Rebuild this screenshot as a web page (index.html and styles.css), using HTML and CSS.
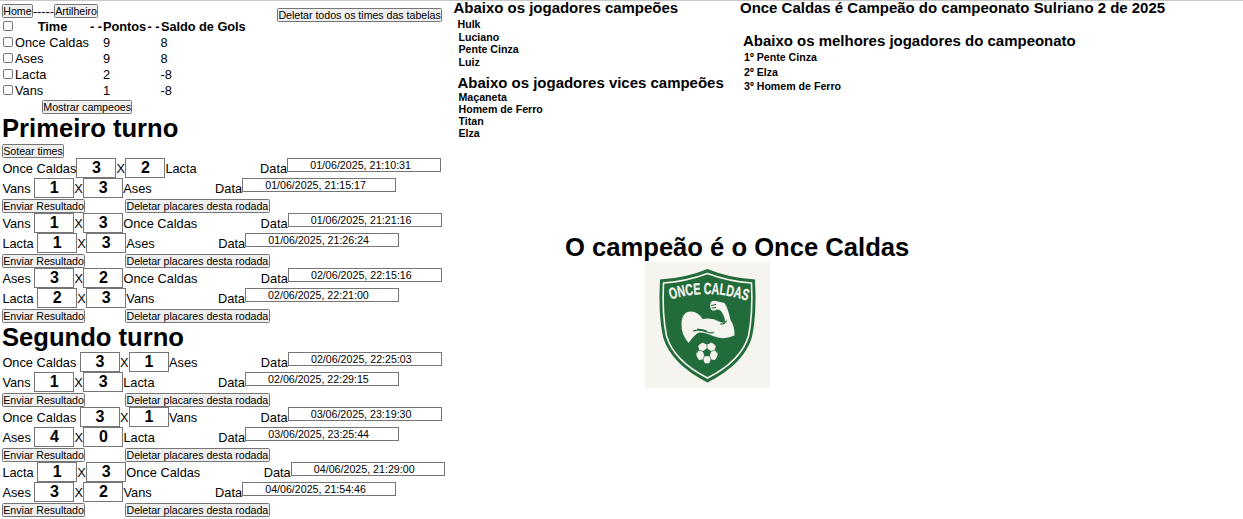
FILE: index.html
```html
<!DOCTYPE html>
<html lang="pt-BR">
<head>
<meta charset="utf-8">
<title>Campeonato</title>
<link rel="stylesheet" href="styles.css">
</head>
<body>
<div class="page">
  <main class="games">
    <div class="top">
      <section class="standings">
        <nav class="nav"><button>Home</button><span>-----</span><button>Artilheiro</button></nav>
        <div class="row head"><i class="check"></i><b class="time">Time</b><b>- -</b><b>Pontos</b><b>- -</b><b>Saldo de Gols</b></div>
        <div class="row"><i class="check"></i><span>Once Caldas</span><span>9</span><span>8</span></div>
        <div class="row"><i class="check"></i><span>Ases</span><span>9</span><span>8</span></div>
        <div class="row"><i class="check"></i><span>Lacta</span><span>2</span><span>-8</span></div>
        <div class="row"><i class="check"></i><span>Vans</span><span>1</span><span>-8</span></div>
        <div class="show"><button>Mostrar campeoes</button></div>
      </section>
      <button class="clear">Deletar todos os times das tabelas</button>
    </div>
    <h1>Primeiro turno</h1>
    <div class="draw"><button>Sotear times</button></div>

    <div class="match"><span class="home tight">Once Caldas</span><b class="score">3</b><span class="x">X</span><b class="score">2</b><span class="away">Lacta</span><span>Data</span><span class="date">01/06/2025, 21:10:31</span></div>
    <div class="match"><span class="home">Vans</span><b class="score">1</b><span class="x">X</span><b class="score">3</b><span class="away">Ases</span><span>Data</span><span class="date">01/06/2025, 21:15:17</span></div>
    <div class="actions"><button>Enviar Resultado</button><button>Deletar placares desta rodada</button></div>
    <div class="match"><span class="home">Vans</span><b class="score">1</b><span class="x">X</span><b class="score">3</b><span class="away">Once Caldas</span><span>Data</span><span class="date">01/06/2025, 21:21:16</span></div>
    <div class="match"><span class="home">Lacta</span><b class="score">1</b><span class="x">X</span><b class="score">3</b><span class="away">Ases</span><span>Data</span><span class="date">01/06/2025, 21:26:24</span></div>
    <div class="actions"><button>Enviar Resultado</button><button>Deletar placares desta rodada</button></div>
    <div class="match"><span class="home">Ases</span><b class="score">3</b><span class="x">X</span><b class="score">2</b><span class="away">Once Caldas</span><span>Data</span><span class="date">02/06/2025, 22:15:16</span></div>
    <div class="match"><span class="home">Lacta</span><b class="score">2</b><span class="x">X</span><b class="score">3</b><span class="away">Vans</span><span>Data</span><span class="date">02/06/2025, 22:21:00</span></div>
    <div class="actions"><button>Enviar Resultado</button><button>Deletar placares desta rodada</button></div>

    <h1>Segundo turno</h1>
    <div class="match"><span class="home">Once Caldas</span><b class="score">3</b><span class="x">X</span><b class="score">1</b><span class="away">Ases</span><span>Data</span><span class="date">02/06/2025, 22:25:03</span></div>
    <div class="match"><span class="home">Vans</span><b class="score">1</b><span class="x">X</span><b class="score">3</b><span class="away">Lacta</span><span>Data</span><span class="date">02/06/2025, 22:29:15</span></div>
    <div class="actions"><button>Enviar Resultado</button><button>Deletar placares desta rodada</button></div>
    <div class="match"><span class="home">Once Caldas</span><b class="score">3</b><span class="x">X</span><b class="score">1</b><span class="away">Vans</span><span>Data</span><span class="date">03/06/2025, 23:19:30</span></div>
    <div class="match"><span class="home">Ases</span><b class="score">4</b><span class="x">X</span><b class="score">0</b><span class="away">Lacta</span><span>Data</span><span class="date">03/06/2025, 23:25:44</span></div>
    <div class="actions"><button>Enviar Resultado</button><button>Deletar placares desta rodada</button></div>
    <div class="match"><span class="home">Lacta</span><b class="score">1</b><span class="x">X</span><b class="score">3</b><span class="away">Once Caldas</span><span>Data</span><span class="date">04/06/2025, 21:29:00</span></div>
    <div class="match"><span class="home">Ases</span><b class="score">3</b><span class="x">X</span><b class="score">2</b><span class="away">Vans</span><span>Data</span><span class="date">04/06/2025, 21:54:46</span></div>
    <div class="actions"><button>Enviar Resultado</button><button>Deletar placares desta rodada</button></div>
  </main>

  <aside class="results">
    <div class="lists">
      <div class="squads">
        <h3>Abaixo os jogadores campeões</h3>
        <ul class="winners"><li class="first">Hulk</li><li>Luciano</li><li>Pente Cinza</li><li>Luiz</li></ul>
        <h3 class="vice">Abaixo os jogadores vices campeões</h3>
        <ul class="runners"><li>Maçaneta</li><li>Homem de Ferro</li><li>Titan</li><li>Elza</li></ul>
      </div>
      <div class="honours">
        <h3>Once Caldas é Campeão do campeonato Sulriano 2 de 2025</h3>
        <h3 class="best">Abaixo os melhores jogadores do campeonato</h3>
        <ul class="podium"><li>1º Pente Cinza</li><li>2º Elza</li><li>3º Homem de Ferro</li></ul>
      </div>
    </div>
    <div class="champion">
      <h1>O campeão é o Once Caldas</h1>
      <svg class="crest" viewBox="0 0 125 126" width="125" height="126">
        <rect width="125" height="126" fill="#f5f4ef"/>
        <path d="M62.500 7Q84 16 110 17.500Q112 52 107 75Q99 102 62.500 120.500Q26 102 18 75Q13 52 15 17.500Q41 16 62.500 7Z" fill="#226b3b"/>
        <path d="M62.500 11.500Q84 19.500 106.500 21Q108 52 103.500 74Q96 99 62.500 116Q29 99 21.500 74Q17 52 18.500 21Q41 19.500 62.500 11.500Z" fill="none" stroke="#f5f4ef" stroke-width="1.600"/>
        <path id="arc" d="M25.500 37.500Q63 26 101.500 38.500" fill="none"/>
        <text class="crest-name"><textPath href="#arc" textLength="78" lengthAdjust="spacingAndGlyphs">ONCE CALDAS</textPath></text>
        <path d="M43.500 81Q36 72 36.500 62C36.500 54 40 49.500 46 49.500Q53 49.500 57.500 57Q67 55 74 59.500Q78 61.500 80 60Q80 54 75.500 48.500Q72 46.500 70 48.500Q66 49 65.500 46Q64.500 42 66 40Q68 38 72 39.200L79.500 41Q83 46 85.500 58Q90 65 89.500 73.500Q78 78.500 68 74Q60 70 54 70.500Q49 73 43.500 81Z" fill="#f5f4ef"/>
        <path d="M48 69Q54 67 60 69.500Q65 71.500 69 70.500M52 67Q58 67.500 62 69M75 62Q80 62.500 81.500 58.500M66 43.500L71 42.500M67 46L71 45.500" fill="none" stroke="#226b3b" stroke-width="1.100"/>
        <circle cx="62" cy="90.500" r="10.800" fill="#f5f4ef"/>
        <path d="M62 86.300L66.200 89.300L64.600 94.200H59.400L57.800 89.300ZM57.500 80.400L62 82.800L66.500 80.400L64 79.400H60ZM51.400 92L54.200 88L53 83.500L51 87ZM72.600 92L69.800 88L71 83.500L73 87ZM53.800 98L58.300 97.500L60 101.500L56 101ZM70.200 98L65.700 97.500L64 101.500L68 101Z" fill="#226b3b"/>
        <path d="M62 82.800V87M58 89.500L54 88M66 89.500L70 88M59.400 94L57.800 98M64.600 94L66.200 98" stroke="#226b3b" stroke-width=".7"/>
      </svg>
    </div>
  </aside>
</div>
</body>
</html>
```
FILE: styles.css
```css
* { box-sizing: border-box; }
body { margin: 0; background: #fff; color: #000; font: 12.8px/16px "Liberation Sans", Arial, sans-serif; }
h1, h3, ul { margin: 0; padding: 0; }
ul { list-style: none; }
.page { display: flex; height: 519px; border-top: 1px solid #c8c8c8; overflow: hidden; }
.games { width: 450px; flex: none; padding: 3px 0 0 2px; white-space: nowrap; }
button { display: block; height: 14px; padding: 0 .3px; border: 1px solid #767676; border-radius: 1.5px; background: #efefef; color: #000; font: 10.667px/12px "Liberation Sans", Arial, sans-serif; letter-spacing: -.035px; white-space: nowrap; }
.top { display: flex; justify-content: space-between; align-items: flex-start; height: 110px; }
.clear { margin: 4px 8px 0 0; }
.nav { display: flex; height: 14px; line-height: 15px; letter-spacing: -.05px; }
.row { display: grid; grid-template-columns: 13px 88px 57.600px auto; height: 16px; line-height: 18px; align-items: center; }
.row.head { grid-template-columns: 13px 75px 13px 44.500px 13.500px auto; letter-spacing: -.05px; }
.time { text-align: center; }
.check { width: 10px; height: 10px; margin: -2px 0 0 1px; border: 1px solid #767676; border-radius: 2px; background: #fff; }
.show { padding: 2px 0 0 40px; }
h1 { height: 29px; font-size: 25.6px; line-height: 29px; }
.draw { height: 15px; padding-top: 1px; }
.match { display: flex; height: 20px; padding-left: .4px; line-height: 22px; }
.home { margin-right: 3.600px; }
.home.tight { margin-right: 0; }
.score { width: 40px; height: 20px; border: 1px solid #767676; font-size: 16px; line-height: 18px; text-align: center; }
.x { width: 9px; }
.away { margin-right: 63.400px; }
.date { width: 154px; height: 14px; padding-right: 7px; border: 1px solid #767676; font-size: 10.667px; line-height: 12px; text-align: center; }
.actions { display: flex; height: 15px; padding-top: 1px; gap: 40px; }
.results { flex: 1; }
.lists { display: flex; height: 231px; white-space: nowrap; }
.squads { width: 290px; padding-left: 3.500px; }
h3 { height: 15px; font-size: 14.976px; line-height: 13px; }
ul { font-size: 10.624px; font-weight: bold; line-height: 12px; }
.winners { padding: 2px 0 0 5px; line-height: 12.600px; }
.winners .first { margin-left: -1px; }
.vice { margin: 8px 0 0 4px; }
.runners { padding-left: 5px; }
.honours .best { margin: 18px 0 0 3px; }
.podium { padding: 1px 0 0 4px; line-height: 14.500px; }
.champion { padding-left: 115px; }
.champion h1 { height: 30px; line-height: 30px; }
.crest { display: block; margin-left: 80px; }
.crest-name { fill: #f5f4ef; stroke: #f5f4ef; stroke-width: .3px; font: bold 16px "Liberation Sans", Arial, sans-serif; }
```
